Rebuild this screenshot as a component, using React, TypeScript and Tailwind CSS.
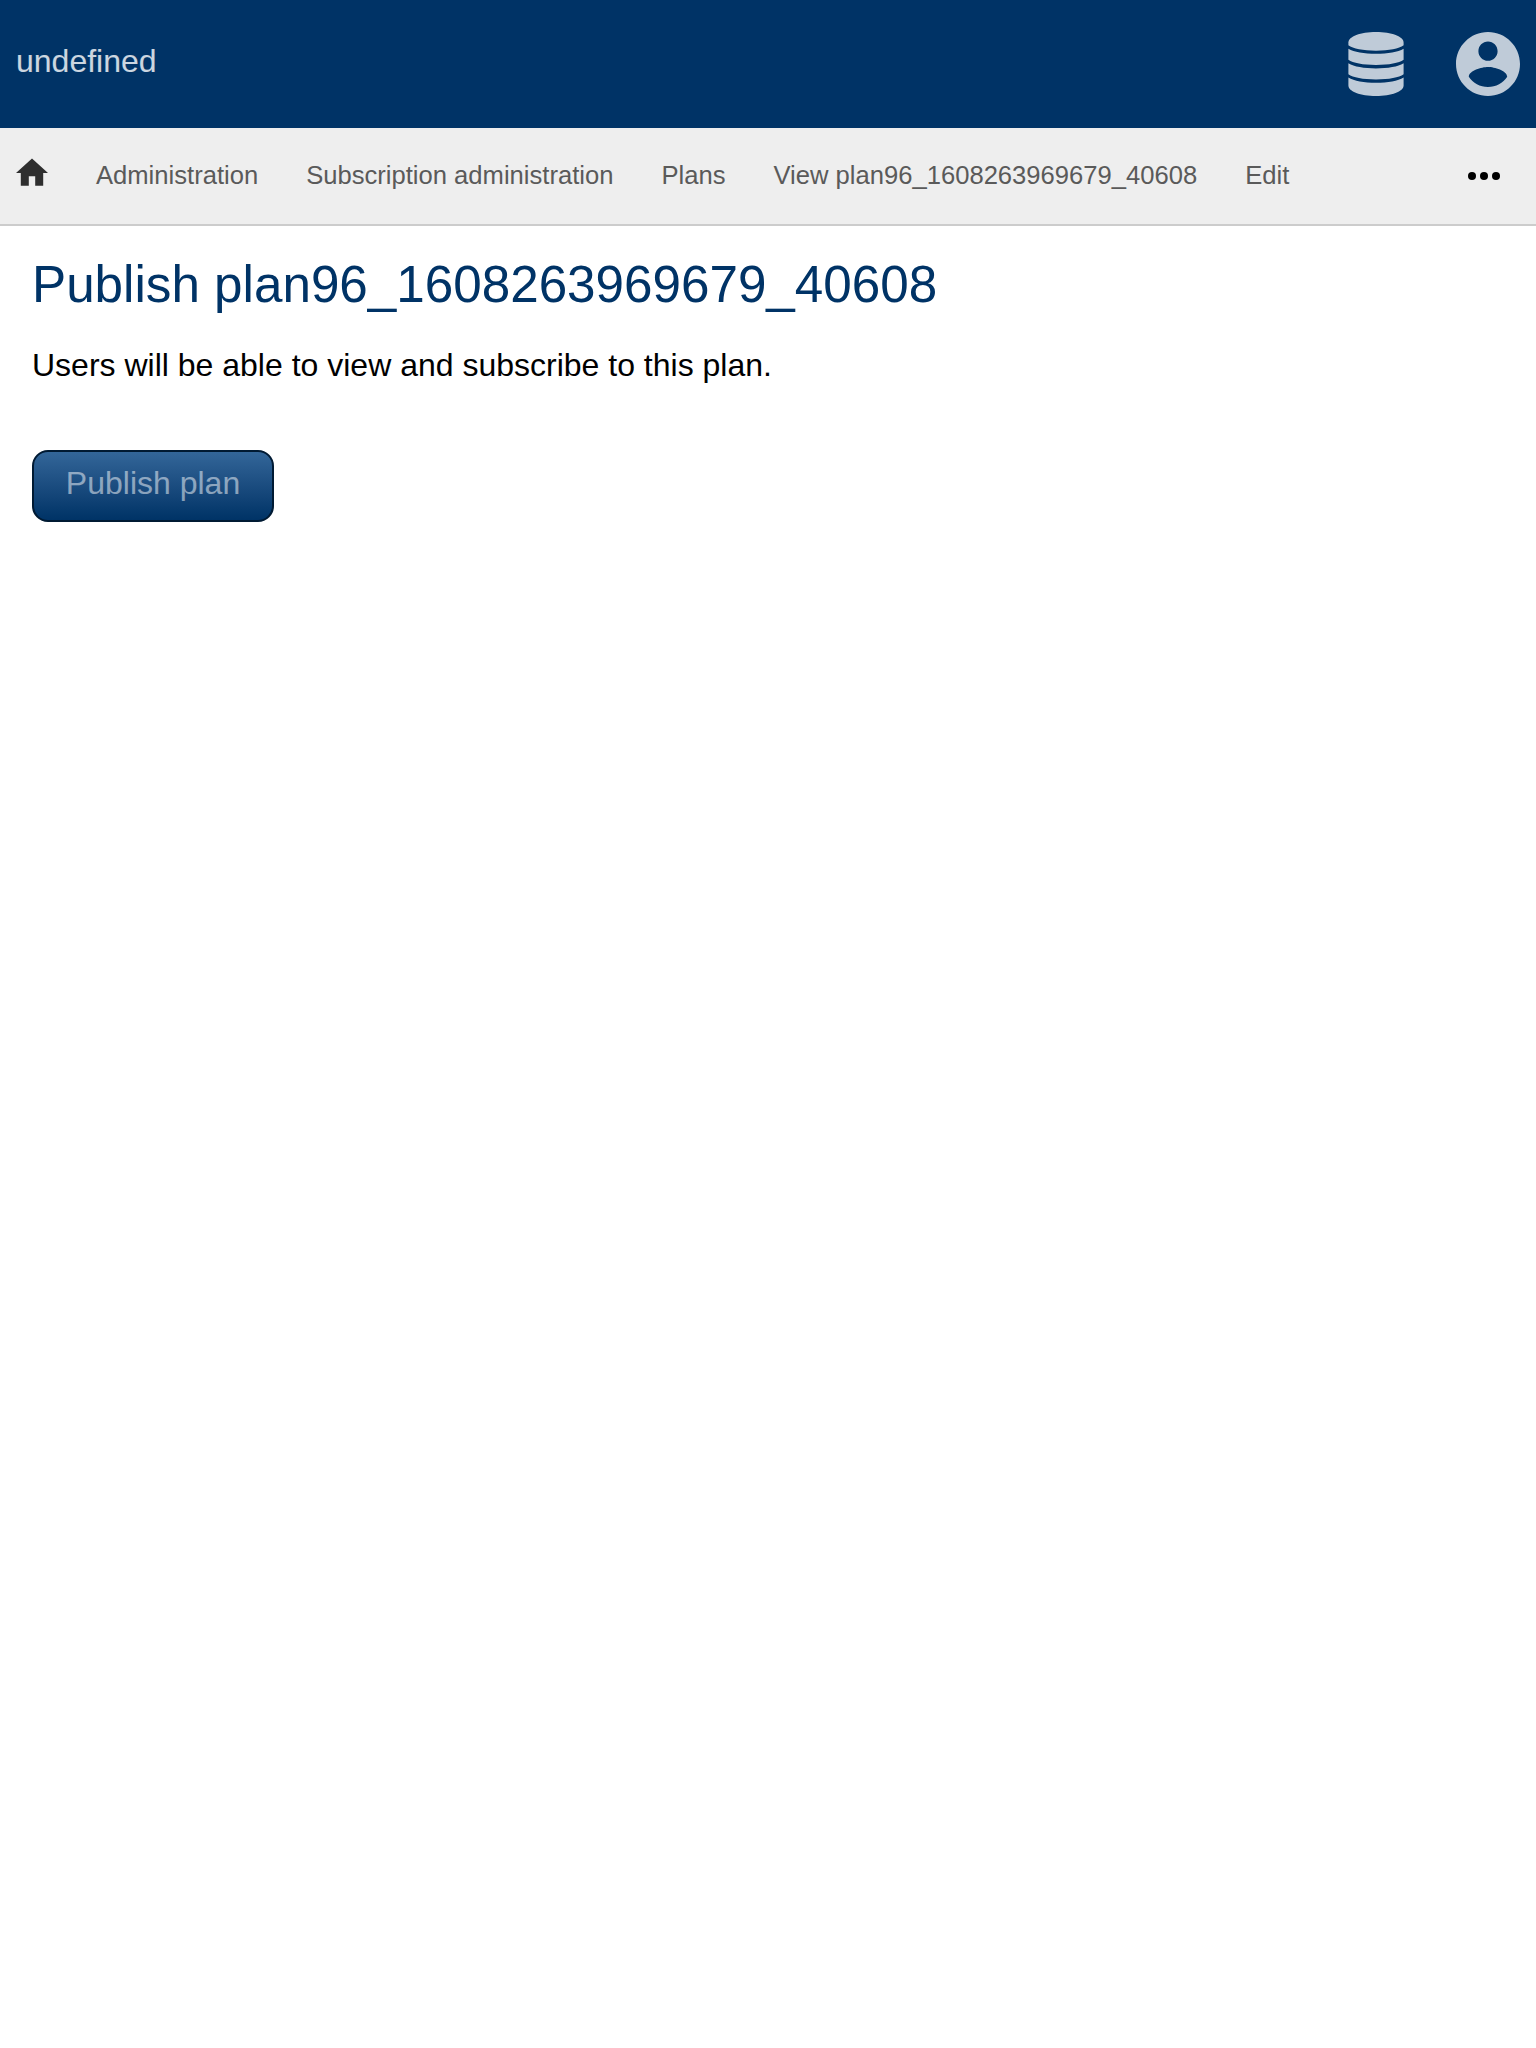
const crumbs = [
  "Administration",
  "Subscription administration",
  "Plans",
  "View plan96_1608263969679_40608",
  "Edit",
];

function DatabaseIcon() {
  return (
    <svg className="h-16 w-14" viewBox="0 0 56 64" fill="currentColor">
      <path d="M28 0C43.500 0 55.600 4.600 55.600 10.500V13.300C51 16.700 41 18.700 28 18.700S5 16.700 0.400 13.300V10.500C0.400 4.600 12.500 0 28 0Z" />
      <path d="M0.400 16.800C6 20 16 21.800 28 21.800S50 20 55.600 16.800V27.800C51 31 41 33 28 33S5 31 0.400 27.800Z" />
      <path d="M0.400 31.200C6 34.600 16 36.400 28 36.400S50 34.600 55.600 31.200V42.200C51 45.400 41 47.400 28 47.400S5 45.400 0.400 42.200Z" />
      <path d="M0.400 45.500C6 49 16 50.800 28 50.800S50 49 55.600 45.500V53.500C55.600 59.400 43.500 64 28 64S0.400 59.400 0.400 53.500Z" />
    </svg>
  );
}

function AccountIcon() {
  return (
    <svg className="size-16" viewBox="2 2 20 20" fill="currentColor">
      <path d="M12 2C6.480 2 2 6.480 2 12s4.480 10 10 10 10-4.480 10-10S17.520 2 12 2zm0 3c1.660 0 3 1.340 3 3s-1.340 3-3 3-3-1.340-3-3 1.340-3 3-3zm0 14.200c-2.500 0-4.710-1.280-6-3.220.03-1.990 4-3.080 6-3.080 1.990 0 5.970 1.090 6 3.080-1.290 1.940-3.500 3.220-6 3.220z" />
    </svg>
  );
}

function HomeIcon() {
  return (
    <svg className="size-8 shrink-0 text-[#2e2e2e]" viewBox="2 2 20 20" fill="currentColor">
      <path d="M10 20v-6h4v6h5v-8h3L12 3 2 12h3v8z" />
    </svg>
  );
}

export default function App() {
  return (
    <div className="min-h-[2048px] bg-white font-['Liberation_Sans',Arial,sans-serif] text-[32px] text-black">
      <header className="flex h-32 items-center justify-between bg-[#003366] px-4 text-white/75">
        <span className="pb-1.5 leading-9 text-white/80">undefined</span>
        <div className="flex items-center gap-[52px]">
          <DatabaseIcon />
          <AccountIcon />
        </div>
      </header>
      <nav className="flex h-[98px] items-center border-b-2 border-[#cccccc] bg-[#eeeeee] pl-4 pr-9 text-[25.6px] leading-8 text-[#5a5a5a]">
        <div className="flex grow items-center gap-12">
          <span className="pb-[6.4px]">
            <HomeIcon />
          </span>
          {crumbs.map((crumb) => (
            <a key={crumb} className="whitespace-nowrap pb-0.5">
              {crumb}
            </a>
          ))}
        </div>
        <svg className="h-2 w-8 text-black" viewBox="0 0 32 8" fill="currentColor">
          <circle cx="4" cy="4" r="4" />
          <circle cx="16" cy="4" r="4" />
          <circle cx="28" cy="4" r="4" />
        </svg>
      </nav>
      <main className="px-8 pt-[29px]">
        <h1 className="text-[51.2px] leading-[60px] text-[#003366]">
          Publish plan96_1608263969679_40608
        </h1>
        <p className="mt-8 leading-9">Users will be able to view and subscribe to this plan.</p>
        <button className="mt-[67px] flex h-[72px] w-[242px] items-center justify-center rounded-2xl border-2 border-[#001a33] bg-linear-to-b from-[#336699] to-[#003366] pb-1.5 leading-9 text-white/50">
          Publish plan
        </button>
      </main>
    </div>
  );
}
